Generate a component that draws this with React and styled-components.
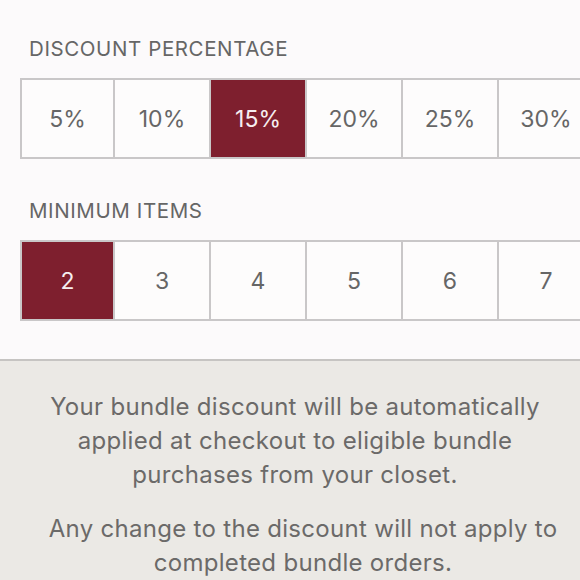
import React, { useState } from 'react';
import styled, { createGlobalStyle } from 'styled-components';

const GlobalStyle = createGlobalStyle`
  html, body {
    margin: 0;
    padding: 0;
    background: #fcfafb;
    overflow: hidden;
  }
  body {
    font-family: Inter, "Liberation Sans", sans-serif;
  }
`;

const Page = styled.div`
  width: 580px;
  height: 580px;
  overflow: hidden;
  display: flex;
  flex-direction: column;
`;

const Settings = styled.div`
  padding: 37px 0 38px 20px;
  background: #fcfafb;
`;

const Label = styled.div`
  font-size: 20.5px;
  letter-spacing: 0.6px;
  color: #666;
  padding-left: 9px;
  margin-bottom: 17px;
  line-height: 24px;
`;

const Options = styled.div`
  display: grid;
  grid-template-columns: 93px repeat(5, 96px);
  width: max-content;
  border: 2px solid #c9c7c8;
  border-right: none;
  margin-bottom: ${(p) => p.gap}px;
`;

const Option = styled.button`
  height: 77px;
  border: none;
  border-right: 2px solid #c9c7c8;
  background: ${(p) => (p.active ? '#7e1f2e' : '#fdfcfc')};
  color: ${(p) => (p.active ? '#f6eef0' : '#666')};
  font-family: inherit;
  font-size: 23px;
  padding: 0;
  cursor: pointer;
`;

const Notice = styled.div`
  flex: 1;
  border-top: 2px solid #c6c4c2;
  background: #ebe9e5;
  padding: 29px 0 0;
  text-align: center;
  color: #6b6a69;
  font-size: 24px;
  letter-spacing: 0.3px;
  line-height: 34px;
`;

const Para = styled.p`
  margin: 0 0 20px;
  padding-left: ${(p) => p.shift}px;
  white-space: nowrap;
`;

const percents = [5, 10, 15, 20, 25, 30];
const counts = [2, 3, 4, 5, 6, 7];

export default function App() {
  const [discount, setDiscount] = useState(15);
  const [minItems, setMinItems] = useState(2);

  return (
    <Page>
      <GlobalStyle />
      <Settings>
        <Label>DISCOUNT PERCENTAGE</Label>
        <Options gap={40}>
          {percents.map((v) => (
            <Option key={v} active={v === discount} onClick={() => setDiscount(v)}>
              {v}%
            </Option>
          ))}
        </Options>
        <Label>MINIMUM ITEMS</Label>
        <Options gap={0}>
          {counts.map((v) => (
            <Option key={v} active={v === minItems} onClick={() => setMinItems(v)}>
              {v}
            </Option>
          ))}
        </Options>
      </Settings>
      <Notice>
        <Para shift={10}>
          Your bundle discount will be automatically
          <br />
          applied at checkout to eligible bundle
          <br />
          purchases from your closet.
        </Para>
        <Para shift={26}>
          Any change to the discount will not apply to
          <br />
          completed bundle orders.
        </Para>
      </Notice>
    </Page>
  );
}
